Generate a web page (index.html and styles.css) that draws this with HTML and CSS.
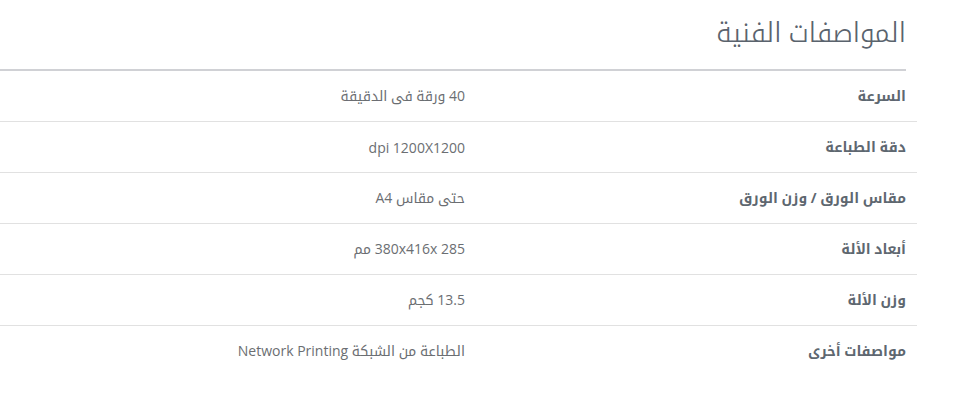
FILE: index.html
```html
<!DOCTYPE html>
<html lang="ar" dir="rtl">
<head>
<meta charset="utf-8">
<link rel="stylesheet" href="styles.css">
</head>
<body>
<div class="specs">
  <h2 class="specs-title">المواصفات الفنية</h2>
  <div class="specs-table">
    <div class="row"><div class="label">السرعة</div><div class="value">40 ورقة فى الدقيقة</div></div>
    <div class="row"><div class="label">دقة الطباعة</div><div class="value">dpi 1200X1200</div></div>
    <div class="row"><div class="label">مقاس الورق / وزن الورق</div><div class="value">حتى مقاس A4</div></div>
    <div class="row"><div class="label">أبعاد الألة</div><div class="value">285 380x416x مم</div></div>
    <div class="row"><div class="label">وزن الألة</div><div class="value">13.5 كجم</div></div>
    <div class="row last"><div class="label">مواصفات أخرى</div><div class="value">الطباعة من الشبكة Network Printing</div></div>
  </div>
</div>
</body>
</html>
```
FILE: styles.css
```css
html, body {
  margin: 0;
  padding: 0;
  background: #fff;
}
body {
  font-family: "Open Sans", "Noto Kufi Arabic", "Noto Sans Arabic", "DejaVu Sans", sans-serif;
  width: 957px;
}
.specs {
  width: 917px;
  margin-left: auto;
  margin-right: 40px;
}
.specs-title {
  margin: 0 11px 0 0;
  padding: 13px 0 18px 0;
  font-size: 27px;
  line-height: 38px;
  font-weight: 300;
  color: #5a636d;
  border-bottom: 2px solid #d0d1d5;
}
.specs-table {
  display: flex;
  flex-direction: column;
}
.row {
  display: grid;
  grid-template-columns: 441px 476px;
  height: 50px;
  border-bottom: 1px solid #e1e1e1;
  align-items: center;
}
.row.last {
  border-bottom: none;
}
.label {
  padding-right: 11px;
  font-size: 14px;
  font-weight: 700;
  color: #5e6770;
}
.value {
  padding-right: 11px;
  font-size: 14px;
  color: #6b6e72;
}
```
